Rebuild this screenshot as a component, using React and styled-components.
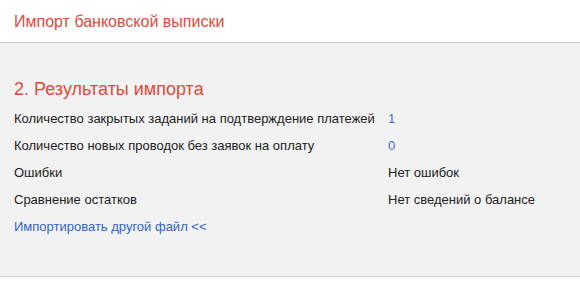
import { Fragment } from "react";
import styled, { createGlobalStyle } from "styled-components";

const GlobalStyle = createGlobalStyle`
  body {
    margin: 0;
    background: #fff;
    font-family: "Liberation Sans", Arial, sans-serif;
  }
`;

const Header = styled.div`
  height: 43px;
  box-sizing: border-box;
  display: flex;
  align-items: center;
  padding: 2px 14px 0;
  border-bottom: 1px solid #d0d0d0;
`;

const HeaderTitle = styled.h1`
  margin: 0;
  font-size: 16px;
  font-weight: normal;
  color: #e04a3b;
`;

const Panel = styled.div`
  background: #f2f2f2;
  height: 234px;
  box-sizing: border-box;
  padding: 34px 14px 0;
  border-bottom: 1px solid #cfcfcf;
`;

const Title = styled.h2`
  margin: 0 0 4px;
  font-size: 18px;
  font-weight: normal;
  color: #e04a3b;
  line-height: 24px;
`;

const Table = styled.div`
  display: grid;
  grid-template-columns: 374px auto;
  font-size: 13px;
`;

const Cell = styled.div`
  line-height: 27px;
  color: ${(p) => (p.$accent ? "#3b6fd8" : "#222")};
`;

const Link = styled.a`
  display: block;
  font-size: 13px;
  line-height: 27px;
  color: #2f63d0;
  text-decoration: none;
`;

const rows = [
  ["Количество закрытых заданий на подтверждение платежей", "1", true],
  ["Количество новых проводок без заявок на оплату", "0", true],
  ["Ошибки", "Нет ошибок", false],
  ["Сравнение остатков", "Нет сведений о балансе", false],
];

export default function App() {
  return (
    <>
      <GlobalStyle />
      <Header>
        <HeaderTitle>Импорт банковской выписки</HeaderTitle>
      </Header>
      <Panel>
        <Title>2. Результаты импорта</Title>
        <Table>
          {rows.map(([label, value, accent]) => (
            <Fragment key={label}>
              <Cell>{label}</Cell>
              <Cell $accent={accent}>{value}</Cell>
            </Fragment>
          ))}
        </Table>
        <Link href="#">Импортировать другой файл &lt;&lt;</Link>
      </Panel>
    </>
  );
}
